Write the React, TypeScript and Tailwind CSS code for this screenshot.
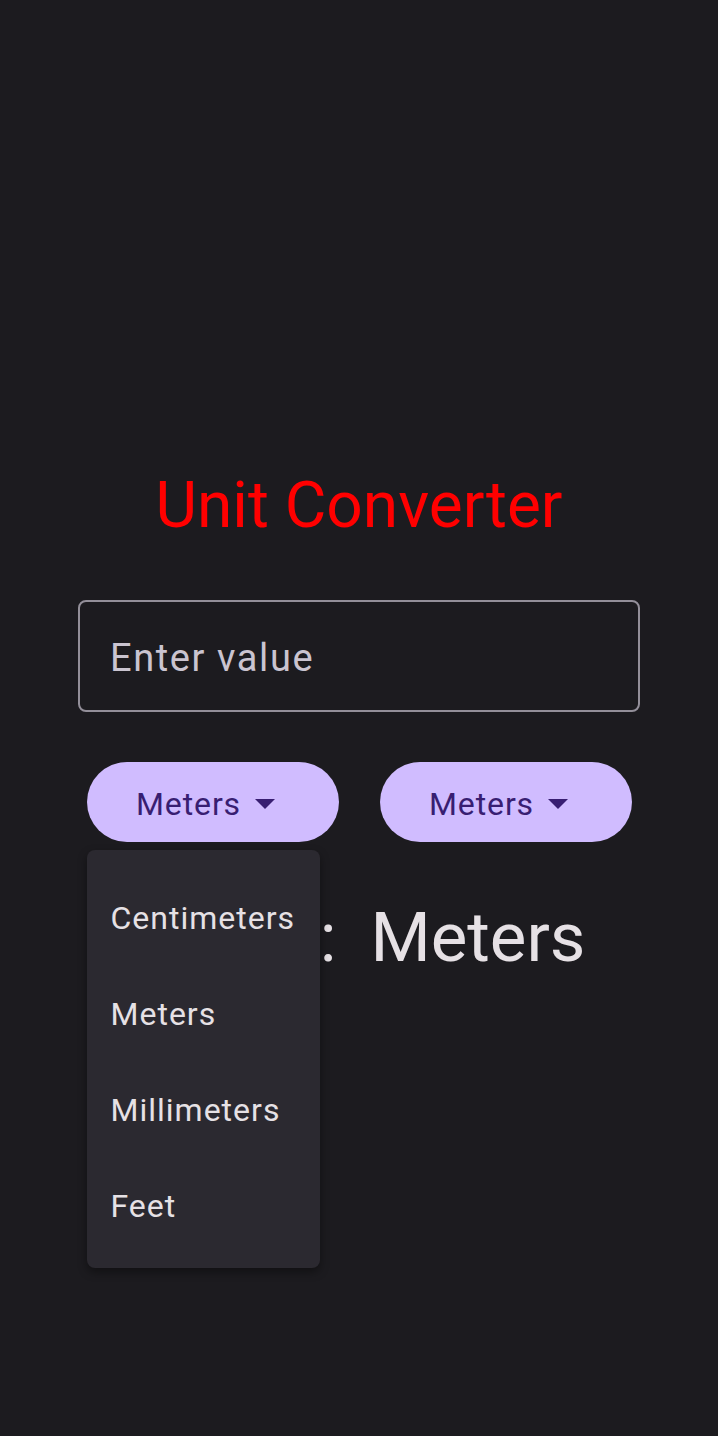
import { useState } from 'react';

const units = ['Centimeters', 'Meters', 'Millimeters', 'Feet'];

const Caret = () => (
  <span className="flex h-[48px] w-[48px] items-center justify-center">
    <svg width="20" height="10" viewBox="0 0 20 10">
      <path d="M0 0 L20 0 L10 10 Z" fill="#381e72" />
    </svg>
  </span>
);

const UnitButton = ({ label, onClick }: { label: string; onClick?: () => void }) => (
  <button
    onClick={onClick}
    className="flex h-[80px] w-[252px] items-center justify-center rounded-full bg-[#d0bcff] pt-[4px] text-[32px] tracking-[0.9px] text-[#381e72]"
  >
    <span>{label}</span>
    <Caret />
  </button>
);

export default function App() {
  const [fromUnit] = useState('Meters');
  const [toUnit] = useState('Meters');
  const [open] = useState(true);

  return (
    <div
      className="flex min-h-[1436px] w-full flex-col items-center bg-[#1c1b1f] pt-[468px]"
      style={{ fontFamily: 'Roboto, "Noto Sans", sans-serif' }}
    >
      {/* Title */}
      <h1 className="text-[64px] leading-[76px] text-[#ff0000]">Unit Converter</h1>

      {/* Input */}
      <div className="mt-[56px] flex h-[112px] w-[562px] items-center rounded-[8px] border-2 border-[#938f99] px-[30px] pt-[4px]">
        <input
          placeholder="Enter value"
          className="w-full bg-transparent text-[38px] tracking-[1.6px] text-[#e6e1e5] outline-none placeholder:text-[#cac4d0]"
        />
      </div>

      {/* Unit pickers */}
      <div className="mt-[50px] flex gap-[41px]">
        <div className="relative">
          <UnitButton label={fromUnit} />
          {open && (
            <div className="absolute left-0 top-full z-10 mt-[8px] w-[233px] rounded-[8px] bg-[#2b2930] py-[17px] shadow-[0_4px_10px_rgba(0,0,0,0.4)]">
              {units.map((u) => (
                <div key={u} className="flex h-[96px] items-center px-[24px] pt-[6px] text-[32px] tracking-[1px] text-[#e6e1e5]">
                  {u}
                </div>
              ))}
            </div>
          )}
        </div>
        <UnitButton label={toUnit} />
      </div>

      {/* Result */}
      <div className="mt-[56px] flex items-baseline pr-[7px] text-[69px] leading-[80px] text-[#e6e1e5]">
        <span>Result</span>
        <span className="ml-[2px]">:</span>
        <span className="ml-[34px]">Meters</span>
      </div>
    </div>
  );
}
